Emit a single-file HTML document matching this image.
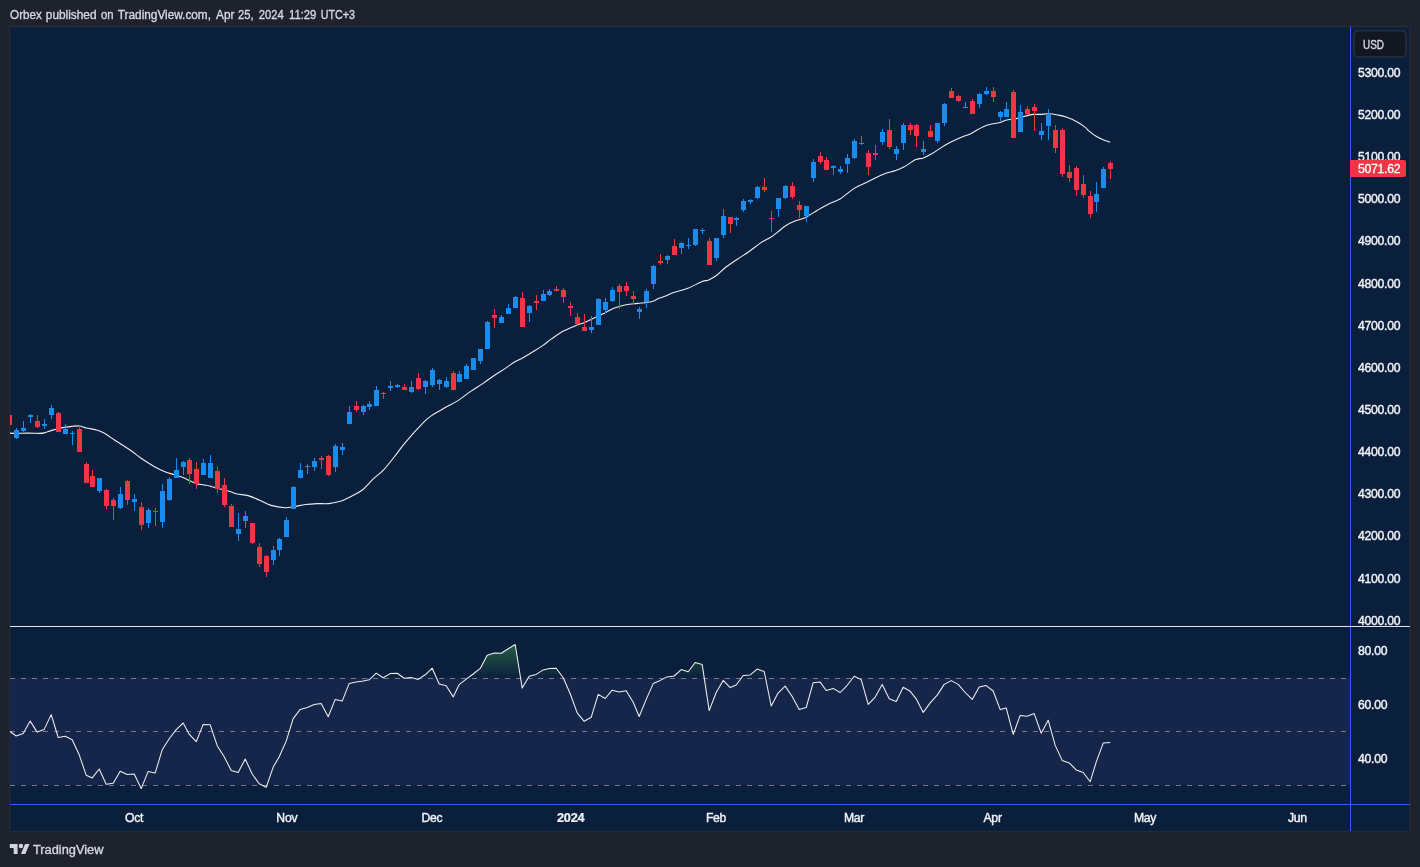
<!DOCTYPE html>
<html><head><meta charset="utf-8"><title>Orbex on TradingView.com</title>
<style>
html,body{margin:0;padding:0;}
body{width:1420px;height:867px;background:#1e222d;overflow:hidden;position:relative;font-family:"Liberation Sans",sans-serif;}
#chart{position:absolute;left:0;top:0;will-change:transform;}
</style></head><body>
<svg id="chart" width="1420" height="867" viewBox="0 0 1420 867">
<defs>
<clipPath id="cpMain"><rect x="10" y="27" width="1340" height="599"/></clipPath>
<clipPath id="cpRsi"><rect x="10" y="627" width="1340" height="177"/></clipPath>
<clipPath id="cpOB"><rect x="10" y="627" width="1340" height="51.5"/></clipPath>
<linearGradient id="gOB" gradientUnits="userSpaceOnUse" x1="0" y1="598" x2="0" y2="678.5"><stop offset="0" stop-color="#4caf50" stop-opacity="1"/><stop offset="1" stop-color="#4caf50" stop-opacity="0"/></linearGradient>
</defs>
<rect x="10" y="27" width="1399.6" height="804.2" fill="#0a1f3c"/>
<rect x="9.8" y="26.5" width="1400.3" height="805.2" fill="none" stroke="#2a2e39" stroke-width="1"/>
<text y="18.9" font-family="'Liberation Sans',sans-serif" font-size="12.3" fill="#d5d8e0" stroke="#d5d8e0" stroke-width="0.35"><tspan x="10.1" textLength="31.7" lengthAdjust="spacingAndGlyphs">Orbex</tspan> <tspan x="45.8" textLength="50.7" lengthAdjust="spacingAndGlyphs">published</tspan> <tspan x="101" textLength="12.6" lengthAdjust="spacingAndGlyphs">on</tspan> <tspan x="117.8" textLength="93.2" lengthAdjust="spacingAndGlyphs">TradingView.com,</tspan> <tspan x="216.1" textLength="18.4" lengthAdjust="spacingAndGlyphs">Apr</tspan> <tspan x="238" textLength="15.5" lengthAdjust="spacingAndGlyphs">25,</tspan> <tspan x="258.8" textLength="24.9" lengthAdjust="spacingAndGlyphs">2024</tspan> <tspan x="289" textLength="27.3" lengthAdjust="spacingAndGlyphs">11:29</tspan> <tspan x="320.7" textLength="34.2" lengthAdjust="spacingAndGlyphs">UTC+3</tspan></text>
<g transform="translate(9.8 844) scale(0.5556) translate(0 -4)" fill="#d1d4dc"><path d="M14 22H7V11H0V4h14v18zM28 22h-8l7.5-18h8L28 22z"/><circle cx="20" cy="7.6" r="4"/></g>
<text x="33" y="853.9" font-family="'Liberation Sans',sans-serif" font-size="12.3" textLength="70.4" lengthAdjust="spacingAndGlyphs" fill="#d5d8e0" stroke="#d5d8e0" stroke-width="0.35">TradingView</text>
<rect x="10" y="677.5" width="1340" height="107.5" fill="#16254a"/>
<g clip-path="url(#cpOB)"><path d="M9.2 730.9 L16.2 736.0 L23.2 733.4 L30.2 721.1 L37.2 732.1 L44.2 729.4 L51.2 714.6 L58.2 737.5 L65.2 736.3 L72.2 739.8 L79.2 754.8 L86.2 775.2 L92.2 777.9 L99.2 769.0 L106.2 784.2 L113.2 783.3 L120.2 771.3 L127.2 774.4 L134.2 774.0 L141.2 788.6 L148.2 771.4 L155.2 772.9 L162.2 749.8 L169.2 738.8 L176.2 729.6 L183.2 723.0 L189.2 734.2 L196.2 741.7 L203.2 724.4 L210.2 724.8 L217.2 745.7 L224.2 756.7 L231.2 770.5 L238.2 772.5 L245.2 759.0 L252.2 774.0 L259.2 783.8 L266.2 787.3 L273.2 767.1 L279.2 756.7 L286.2 741.1 L293.2 718.6 L300.2 709.4 L307.2 707.4 L314.2 704.6 L321.2 703.6 L328.2 716.7 L335.2 699.4 L342.2 701.1 L349.2 683.4 L356.2 681.9 L363.2 680.9 L369.2 679.8 L376.2 673.1 L383.2 677.7 L390.2 673.6 L397.2 673.3 L404.2 678.3 L411.2 677.4 L418.2 679.4 L425.2 674.8 L432.2 668.2 L439.2 684.0 L446.2 685.7 L453.2 696.9 L459.2 684.6 L466.2 679.2 L473.2 674.0 L480.2 668.4 L487.2 655.2 L494.2 652.9 L501.2 653.2 L508.2 648.8 L515.2 644.5 L522.2 688.1 L529.2 676.3 L536.2 674.4 L543.2 669.9 L549.2 668.6 L556.2 668.3 L563.2 677.7 L570.2 693.8 L577.2 712.9 L584.2 721.3 L591.2 717.3 L598.2 694.4 L605.2 698.5 L612.2 690.2 L619.2 692.1 L626.2 690.7 L633.2 702.3 L639.2 716.5 L646.2 699.4 L653.2 683.6 L660.2 680.4 L667.2 676.9 L674.2 676.0 L681.2 669.6 L688.2 671.7 L695.2 662.5 L702.2 664.6 L709.2 710.6 L716.2 692.5 L723.2 680.4 L730.2 687.6 L736.2 685.0 L743.2 675.5 L750.2 674.9 L757.2 669.1 L764.2 671.5 L771.2 706.0 L778.2 692.8 L785.2 686.1 L792.2 696.5 L799.2 709.6 L806.2 707.5 L813.2 682.7 L820.2 682.1 L826.2 690.5 L833.2 688.4 L840.2 692.5 L847.2 685.3 L854.2 676.3 L861.2 679.6 L868.2 704.4 L875.2 697.1 L882.2 684.4 L889.2 698.8 L896.2 701.4 L903.2 687.3 L910.2 691.3 L916.2 698.8 L923.2 712.4 L930.2 702.9 L937.2 695.1 L944.2 684.4 L951.2 680.6 L958.2 684.4 L965.2 692.5 L972.2 699.4 L979.2 686.9 L986.2 685.6 L993.2 691.0 L1000.2 709.6 L1006.2 707.9 L1013.2 734.4 L1020.2 715.4 L1027.2 716.3 L1034.2 713.6 L1041.2 733.3 L1048.2 720.2 L1055.2 745.4 L1062.2 760.4 L1069.2 762.9 L1076.2 769.9 L1083.2 772.5 L1090.2 781.7 L1096.2 762.1 L1103.2 743.1 L1110.2 742.5 L1110.2 900 L9.2 900 Z" fill="url(#gOB)"/></g>
<g fill="none" stroke="#787b86" stroke-width="1" stroke-dasharray="5 6" shape-rendering="crispEdges">
<path d="M10 678.5H1350" stroke-dashoffset="0"/><path d="M10 731.5H1350"/><path d="M10 785.5H1350"/>
</g>
<g clip-path="url(#cpRsi)"><path d="M9.2 730.9 L16.2 736.0 L23.2 733.4 L30.2 721.1 L37.2 732.1 L44.2 729.4 L51.2 714.6 L58.2 737.5 L65.2 736.3 L72.2 739.8 L79.2 754.8 L86.2 775.2 L92.2 777.9 L99.2 769.0 L106.2 784.2 L113.2 783.3 L120.2 771.3 L127.2 774.4 L134.2 774.0 L141.2 788.6 L148.2 771.4 L155.2 772.9 L162.2 749.8 L169.2 738.8 L176.2 729.6 L183.2 723.0 L189.2 734.2 L196.2 741.7 L203.2 724.4 L210.2 724.8 L217.2 745.7 L224.2 756.7 L231.2 770.5 L238.2 772.5 L245.2 759.0 L252.2 774.0 L259.2 783.8 L266.2 787.3 L273.2 767.1 L279.2 756.7 L286.2 741.1 L293.2 718.6 L300.2 709.4 L307.2 707.4 L314.2 704.6 L321.2 703.6 L328.2 716.7 L335.2 699.4 L342.2 701.1 L349.2 683.4 L356.2 681.9 L363.2 680.9 L369.2 679.8 L376.2 673.1 L383.2 677.7 L390.2 673.6 L397.2 673.3 L404.2 678.3 L411.2 677.4 L418.2 679.4 L425.2 674.8 L432.2 668.2 L439.2 684.0 L446.2 685.7 L453.2 696.9 L459.2 684.6 L466.2 679.2 L473.2 674.0 L480.2 668.4 L487.2 655.2 L494.2 652.9 L501.2 653.2 L508.2 648.8 L515.2 644.5 L522.2 688.1 L529.2 676.3 L536.2 674.4 L543.2 669.9 L549.2 668.6 L556.2 668.3 L563.2 677.7 L570.2 693.8 L577.2 712.9 L584.2 721.3 L591.2 717.3 L598.2 694.4 L605.2 698.5 L612.2 690.2 L619.2 692.1 L626.2 690.7 L633.2 702.3 L639.2 716.5 L646.2 699.4 L653.2 683.6 L660.2 680.4 L667.2 676.9 L674.2 676.0 L681.2 669.6 L688.2 671.7 L695.2 662.5 L702.2 664.6 L709.2 710.6 L716.2 692.5 L723.2 680.4 L730.2 687.6 L736.2 685.0 L743.2 675.5 L750.2 674.9 L757.2 669.1 L764.2 671.5 L771.2 706.0 L778.2 692.8 L785.2 686.1 L792.2 696.5 L799.2 709.6 L806.2 707.5 L813.2 682.7 L820.2 682.1 L826.2 690.5 L833.2 688.4 L840.2 692.5 L847.2 685.3 L854.2 676.3 L861.2 679.6 L868.2 704.4 L875.2 697.1 L882.2 684.4 L889.2 698.8 L896.2 701.4 L903.2 687.3 L910.2 691.3 L916.2 698.8 L923.2 712.4 L930.2 702.9 L937.2 695.1 L944.2 684.4 L951.2 680.6 L958.2 684.4 L965.2 692.5 L972.2 699.4 L979.2 686.9 L986.2 685.6 L993.2 691.0 L1000.2 709.6 L1006.2 707.9 L1013.2 734.4 L1020.2 715.4 L1027.2 716.3 L1034.2 713.6 L1041.2 733.3 L1048.2 720.2 L1055.2 745.4 L1062.2 760.4 L1069.2 762.9 L1076.2 769.9 L1083.2 772.5 L1090.2 781.7 L1096.2 762.1 L1103.2 743.1 L1110.2 742.5" fill="none" stroke="#f0f0f0" stroke-width="1.05" stroke-linejoin="round"/></g>
<g clip-path="url(#cpMain)">
<path d="M9.5 433.1 C10.7 433.2 13.4 433.4 16.5 433.4 C19.6 433.4 24.2 433.1 28.1 433.1 C32.0 433.1 36.9 433.4 39.6 433.4 C42.3 433.4 42.3 433.4 44.2 432.9 C46.1 432.4 48.7 431.3 51.1 430.6 C53.5 429.9 56.1 429.1 58.5 428.5 C60.9 427.9 63.1 427.5 65.4 427.1 C67.7 426.7 70.2 426.5 72.5 426.3 C74.8 426.1 77.1 425.7 79.4 426.0 C81.7 426.3 83.4 427.3 86.4 428.0 C89.4 428.7 94.5 429.4 97.3 430.2 C100.1 431.0 100.3 431.1 103 432.6 C105.7 434.1 110.5 437.3 113.4 439.2 C116.3 441.1 117.2 441.8 120.3 443.8 C123.4 445.8 128.4 448.9 131.9 451.3 C135.4 453.7 137.3 455.6 141.1 458.2 C144.9 460.8 150.9 464.6 154.9 466.9 C158.9 469.1 161.8 470.4 165 471.7 C168.2 473.0 170.8 473.6 173.8 474.6 C176.8 475.6 180.4 476.5 183 477.5 C185.6 478.5 187.3 479.6 189.5 480.6 C191.7 481.6 193.6 482.8 196.4 483.6 C199.2 484.4 202.6 484.5 206.1 485.3 C209.6 486.1 213.6 487.2 217.4 488.2 C221.2 489.2 225.9 490.3 229.2 491.3 C232.5 492.3 234.0 493.3 237.2 494 C240.3 494.7 244.4 494.6 248.1 495.6 C251.8 496.6 255.8 498.6 259.6 500.2 C263.4 501.8 266.9 504.1 271.1 505.4 C275.3 506.6 281.4 507.5 285 507.7 C288.6 507.9 289.6 507.3 293 506.8 C296.4 506.3 301.6 505.0 305.7 504.5 C309.8 504.0 313.4 503.8 317.3 503.6 C321.2 503.5 325.0 504.0 328.8 503.6 C332.6 503.2 337.6 502.0 340.3 501.3 C343.0 500.6 343.1 500.3 345 499.4 C346.9 498.5 349.0 497.7 351.9 496.1 C354.8 494.5 358.6 492.9 362.3 490 C366.0 487.1 370.3 481.7 373.8 478.4 C377.3 475.1 379.6 474.0 383.1 470.4 C386.6 466.8 391.2 460.8 394.6 456.5 C398.1 452.2 400.5 448.4 403.8 444.4 C407.1 440.4 410.7 436.1 414.2 432.3 C417.7 428.5 421.7 424.1 424.6 421.3 C427.5 418.5 428.1 417.9 431.5 415.6 C434.9 413.3 440.9 410.0 445.3 407.5 C449.7 405.0 453.7 403.3 458 400.6 C462.3 397.9 467.0 393.9 471.1 391.1 C475.2 388.3 478.9 386.2 482.7 383.6 C486.5 381.0 490.4 378.1 494.2 375.5 C498.0 372.9 502.2 370.4 505.7 368.1 C509.2 365.8 512.1 363.4 515 361.7 C517.9 360.0 519.7 359.5 523 357.7 C526.3 355.9 531.3 352.7 534.6 350.7 C537.9 348.7 539.7 347.6 542.6 345.6 C545.5 343.6 548.4 341.0 551.9 338.6 C555.4 336.2 559.6 333.2 563.4 331.1 C567.2 329.0 571.2 327.5 574.9 326 C578.6 324.5 582.4 323.3 585.7 321.9 C589.1 320.5 592.1 319.0 595 317.6 C597.9 316.2 599.7 315.4 603 313.8 C606.3 312.2 610.8 309.6 614.6 308.1 C618.5 306.6 622.3 305.6 626.1 304.8 C629.9 304.0 633.4 303.9 637.6 303.4 C641.8 302.9 648.0 302.5 651.5 301.7 C655.0 300.9 656.1 299.5 658.4 298.6 C660.6 297.7 662.5 297.3 665 296.3 C667.5 295.3 669.8 293.9 673.6 292.6 C677.4 291.3 683.1 290.2 687.9 288.3 C692.7 286.4 698.7 282.9 702.2 281.5 C705.7 280.1 706.2 281.1 708.7 280 C711.2 278.9 714.3 277.1 717.1 275 C719.9 272.9 722.3 269.9 725.7 267.3 C729.1 264.7 733.4 261.8 737.3 259.2 C741.1 256.6 745.0 254.4 748.8 251.7 C752.6 249.0 756.6 245.5 760.3 243.1 C763.9 240.7 767.8 239.1 770.7 237.3 C773.6 235.5 775.1 234.0 777.6 232.1 C780.1 230.2 782.8 227.5 785.7 225.7 C788.6 223.9 791.7 222.4 794.9 221.1 C798.1 219.8 801.2 219.5 805 217.7 C808.8 215.8 813.9 212.3 817.9 210 C821.9 207.7 825.0 205.9 828.8 204 C832.5 202.1 836.2 201.4 840.4 198.8 C844.6 196.2 850.0 191.1 854.2 188.4 C858.4 185.7 861.9 184.6 865.7 182.7 C869.6 180.8 874.0 178.4 877.3 176.9 C880.6 175.4 882.2 174.5 885.3 173.4 C888.4 172.3 892.6 171.7 895.7 170.6 C898.8 169.5 900.5 168.9 903.8 167.1 C907.1 165.3 912.0 161.3 915.3 159.8 C918.6 158.3 920.5 159.0 923.4 157.9 C926.3 156.8 929.0 155.4 932.6 153.3 C936.2 151.2 940.5 147.7 945 145.2 C949.5 142.7 955.2 140.1 959.6 138.1 C964.0 136.1 966.9 135.4 971.1 133.4 C975.3 131.4 980.2 127.7 985 125.9 C989.8 124.1 996.5 123.5 1000 122.5 C1003.5 121.5 1002.8 120.9 1005.7 120.2 C1008.6 119.5 1014.0 119.1 1017.3 118.4 C1020.6 117.7 1022.6 116.8 1025.3 116.1 C1028.0 115.4 1030.9 114.7 1033.4 114.4 C1035.9 114.1 1037.8 114.5 1040.3 114.4 C1042.8 114.3 1045.5 113.7 1048.4 113.8 C1051.3 113.9 1054.5 114.4 1057.6 115 C1060.7 115.6 1063.6 116.1 1066.9 117.3 C1070.2 118.5 1074.2 120.3 1077.2 121.9 C1080.2 123.5 1083.1 125.6 1085 127.1 C1086.9 128.6 1087.0 129.3 1088.8 130.8 C1090.6 132.3 1093.4 134.6 1095.7 136 C1098.0 137.4 1100.3 138.3 1102.7 139.4 C1105.1 140.5 1109.0 141.8 1110.2 142.3" fill="none" stroke="#eeeeee" stroke-width="1.1" stroke-linejoin="round"/>
<g shape-rendering="crispEdges"><path d="M16 428h1v11h-1zM14 430h5v8h-5zM23 421h1v11h-1zM21 428h5v3h-5zM30 414h1v9h-1zM28 415h5v2h-5zM44 419h1v10h-1zM42 424h5v2h-5zM51 405h1v14h-1zM49 408h5v7h-5zM65 424h1v10h-1zM63 429h5v5h-5zM72 431h1v14h-1zM70 433h5v1h-5zM99 478h1v15h-1zM97 478h5v13h-5zM120 487h1v22h-1zM118 494h5v14h-5zM134 494h1v17h-1zM132 499h5v3h-5zM148 508h1v20h-1zM146 510h5v13h-5zM162 484h1v44h-1zM160 491h5v31h-5zM169 477h1v24h-1zM167 479h5v21h-5zM176 458h1v20h-1zM174 470h5v8h-5zM183 461h1v14h-1zM181 462h5v5h-5zM203 459h1v16h-1zM201 463h5v12h-5zM210 455h1v23h-1zM208 463h5v15h-5zM238 513h1v28h-1zM236 529h5v5h-5zM245 511h1v17h-1zM243 516h5v5h-5zM273 546h1v19h-1zM271 550h5v10h-5zM279 538h1v18h-1zM277 539h5v11h-5zM286 517h1v20h-1zM284 520h5v17h-5zM293 486h1v23h-1zM291 487h5v22h-5zM300 463h1v15h-1zM298 470h5v8h-5zM307 464h1v10h-1zM305 466h5v1h-5zM314 458h1v13h-1zM312 461h5v6h-5zM335 444h1v28h-1zM333 446h5v21h-5zM342 443h1v12h-1zM340 447h5v3h-5zM349 406h1v18h-1zM347 412h5v12h-5zM363 405h1v10h-1zM361 406h5v6h-5zM369 401h1v9h-1zM367 404h5v3h-5zM376 386h1v20h-1zM374 390h5v16h-5zM390 381h1v10h-1zM388 386h5v2h-5zM397 384h1v4h-1zM395 385h5v2h-5zM411 381h1v12h-1zM409 387h5v5h-5zM425 380h1v14h-1zM423 381h5v6h-5zM432 368h1v19h-1zM430 370h5v15h-5zM439 379h1v11h-1zM437 380h5v4h-5zM446 377h1v11h-1zM444 381h5v6h-5zM459 371h1v11h-1zM457 374h5v8h-5zM466 364h1v15h-1zM464 366h5v13h-5zM471 358h5v12h-5zM480 349h1v15h-1zM478 349h5v12h-5zM487 321h1v28h-1zM485 322h5v27h-5zM501 315h1v8h-1zM499 317h5v6h-5zM508 304h1v10h-1zM506 308h5v6h-5zM515 296h1v12h-1zM513 297h5v11h-5zM529 305h1v17h-1zM527 306h5v7h-5zM543 290h1v11h-1zM541 294h5v7h-5zM549 289h1v7h-1zM547 291h5v4h-5zM591 316h1v17h-1zM589 327h5v3h-5zM598 298h1v27h-1zM596 299h5v26h-5zM605 298h1v15h-1zM603 302h5v8h-5zM612 287h1v15h-1zM610 290h5v11h-5zM639 307h1v12h-1zM637 309h5v3h-5zM646 289h1v19h-1zM644 291h5v11h-5zM653 265h1v24h-1zM651 266h5v18h-5zM667 255h1v9h-1zM665 256h5v4h-5zM681 242h1v12h-1zM679 243h5v5h-5zM688 238h1v11h-1zM686 245h5v1h-5zM695 229h1v17h-1zM693 229h5v16h-5zM702 228h1v6h-1zM700 230h5v1h-5zM716 238h1v23h-1zM714 238h5v20h-5zM723 209h1v29h-1zM721 216h5v19h-5zM736 217h1v9h-1zM734 218h5v2h-5zM743 199h1v13h-1zM741 201h5v9h-5zM750 199h1v5h-1zM748 200h5v2h-5zM757 186h1v13h-1zM755 187h5v11h-5zM778 198h1v19h-1zM776 198h5v11h-5zM785 185h1v14h-1zM783 186h5v12h-5zM806 206h1v16h-1zM804 206h5v10h-5zM813 159h1v23h-1zM811 162h5v16h-5zM833 165h1v10h-1zM831 166h5v2h-5zM840 166h1v8h-1zM838 169h5v3h-5zM847 154h1v19h-1zM845 158h5v6h-5zM854 139h1v20h-1zM852 141h5v17h-5zM861 136h1v9h-1zM859 143h5v1h-5zM882 129h1v16h-1zM880 132h5v10h-5zM896 146h1v14h-1zM894 149h5v5h-5zM903 123h1v27h-1zM901 125h5v18h-5zM923 141h1v14h-1zM921 149h5v3h-5zM937 123h1v20h-1zM935 123h5v18h-5zM944 103h1v23h-1zM942 104h5v19h-5zM965 102h1v6h-1zM963 107h5v1h-5zM979 93h1v15h-1zM977 94h5v10h-5zM986 87h1v8h-1zM984 91h5v3h-5zM1000 111h1v10h-1zM998 112h5v5h-5zM1006 102h1v15h-1zM1004 109h5v8h-5zM1020 105h1v27h-1zM1018 112h5v20h-5zM1041 123h1v17h-1zM1039 131h5v4h-5zM1048 109h1v31h-1zM1046 115h5v11h-5zM1096 182h1v30h-1zM1094 194h5v8h-5zM1103 167h1v21h-1zM1101 169h5v19h-5z" fill="#1a8cee"/><path d="M7 415h5v10h-5zM37 415h1v13h-1zM35 421h5v6h-5zM58 412h1v20h-1zM56 413h5v19h-5zM79 426h1v26h-1zM77 429h5v23h-5zM86 462h1v21h-1zM84 464h5v19h-5zM92 470h1v17h-1zM90 476h5v11h-5zM106 489h1v20h-1zM104 490h5v16h-5zM113 498h1v22h-1zM111 500h5v6h-5zM127 480h1v25h-1zM125 481h5v19h-5zM141 502h1v28h-1zM139 507h5v18h-5zM155 508h1v18h-1zM153 511h5v1h-5zM189 458h1v26h-1zM187 460h5v14h-5zM196 462h1v27h-1zM194 469h5v15h-5zM217 467h1v26h-1zM215 471h5v18h-5zM224 478h1v29h-1zM222 485h5v20h-5zM231 504h1v23h-1zM229 506h5v21h-5zM252 523h1v21h-1zM250 523h5v20h-5zM259 543h1v24h-1zM257 547h5v17h-5zM266 555h1v22h-1zM264 556h5v16h-5zM321 456h1v13h-1zM319 458h5v2h-5zM328 455h1v21h-1zM326 456h5v19h-5zM356 401h1v11h-1zM354 406h5v4h-5zM383 392h1v7h-1zM381 393h5v1h-5zM404 384h1v6h-1zM402 387h5v3h-5zM418 373h1v17h-1zM416 378h5v11h-5zM453 371h1v19h-1zM451 373h5v17h-5zM494 309h1v19h-1zM492 315h5v3h-5zM522 292h1v35h-1zM520 298h5v29h-5zM536 295h1v15h-1zM534 301h5v2h-5zM556 286h1v5h-1zM554 289h5v2h-5zM563 288h1v15h-1zM561 290h5v7h-5zM570 302h1v14h-1zM568 306h5v2h-5zM577 313h1v12h-1zM575 317h5v7h-5zM584 314h1v17h-1zM582 327h5v4h-5zM619 284h1v25h-1zM617 286h5v6h-5zM626 282h1v14h-1zM624 286h5v5h-5zM633 291h1v14h-1zM631 296h5v3h-5zM660 254h1v11h-1zM658 261h5v2h-5zM674 239h1v16h-1zM672 246h5v9h-5zM709 238h1v27h-1zM707 241h5v24h-5zM730 217h1v16h-1zM728 217h5v7h-5zM764 178h1v14h-1zM762 187h5v3h-5zM771 211h1v21h-1zM769 218h5v1h-5zM792 182h1v17h-1zM790 186h5v11h-5zM799 201h1v17h-1zM797 205h5v5h-5zM820 152h1v12h-1zM818 156h5v6h-5zM826 157h1v13h-1zM824 160h5v10h-5zM868 150h1v25h-1zM866 153h5v14h-5zM875 145h1v15h-1zM873 153h5v2h-5zM889 119h1v30h-1zM887 130h5v17h-5zM910 123h1v12h-1zM908 125h5v5h-5zM916 124h1v23h-1zM914 125h5v11h-5zM930 125h1v12h-1zM928 131h5v6h-5zM951 88h1v10h-1zM949 91h5v7h-5zM958 95h1v7h-1zM956 96h5v5h-5zM972 99h1v15h-1zM970 101h5v13h-5zM993 87h1v15h-1zM991 91h5v6h-5zM1013 90h1v48h-1zM1011 92h5v46h-5zM1027 106h1v9h-1zM1025 109h5v5h-5zM1034 104h1v27h-1zM1032 107h5v4h-5zM1055 125h1v28h-1zM1053 130h5v18h-5zM1062 128h1v49h-1zM1060 130h5v44h-5zM1069 165h1v17h-1zM1067 172h5v6h-5zM1076 166h1v30h-1zM1074 168h5v22h-5zM1083 175h1v23h-1zM1081 184h5v11h-5zM1090 191h1v27h-1zM1088 196h5v18h-5zM1110 161h1v18h-1zM1108 163h5v6h-5z" fill="#f03545"/></g>
</g>
<g shape-rendering="crispEdges">
<rect x="1350" y="27" width="1" height="804" fill="#2962ff"/>
<rect x="10" y="626" width="1400" height="1" fill="#e0e3eb"/>
<rect x="10" y="804" width="1400" height="1" fill="#2962ff"/>
</g>
<g font-family="'Liberation Sans',sans-serif" font-size="12.2" letter-spacing="-0.26" fill="#f2f3f6" stroke="#f2f3f6" stroke-width="0.4"><text x="1358" y="76.8">5300.00</text><text x="1358" y="118.9">5200.00</text><text x="1358" y="161.1">5100.00</text><text x="1358" y="203.2">5000.00</text><text x="1358" y="245.4">4900.00</text><text x="1358" y="287.5">4800.00</text><text x="1358" y="329.6">4700.00</text><text x="1358" y="371.8">4600.00</text><text x="1358" y="413.9">4500.00</text><text x="1358" y="456.1">4400.00</text><text x="1358" y="498.2">4300.00</text><text x="1358" y="540.3">4200.00</text><text x="1358" y="582.5">4100.00</text><text x="1358" y="625.0">4000.00</text><text x="1358" y="655.2">80.00</text><text x="1358" y="708.9">60.00</text><text x="1358" y="762.6">40.00</text></g>
<g font-family="'Liberation Sans',sans-serif" font-size="12.2" letter-spacing="-0.26" fill="#f2f3f6" stroke="#f2f3f6" stroke-width="0.4" text-anchor="middle"><text x="134" y="822">Oct</text><text x="286.8" y="822">Nov</text><text x="432" y="822">Dec</text><text x="570.7" y="822" font-weight="bold" stroke-width="0.2" textLength="27.3" lengthAdjust="spacingAndGlyphs">2024</text><text x="716" y="822">Feb</text><text x="854" y="822">Mar</text><text x="992.6" y="822">Apr</text><text x="1145" y="822">May</text><text x="1297.4" y="822">Jun</text></g>
<rect x="1354" y="30.8" width="52" height="26.2" rx="4" ry="4" fill="#131722" stroke="#363a45" stroke-width="1"/>
<text x="1363" y="48.9" font-family="'Liberation Sans',sans-serif" font-size="12.4" textLength="21" lengthAdjust="spacingAndGlyphs" fill="#d5d8e0" stroke="#d5d8e0" stroke-width="0.4">USD</text>
<path d="M1350 160H1404a2 2 0 0 1 2 2V175a2 2 0 0 1 -2 2H1350z" fill="#f03545"/>
<text x="1358" y="173" font-family="'Liberation Sans',sans-serif" font-size="12.2" letter-spacing="-0.26" fill="#ffffff" stroke="#ffffff" stroke-width="0.3">5071.62</text>
</svg>
</body></html>
